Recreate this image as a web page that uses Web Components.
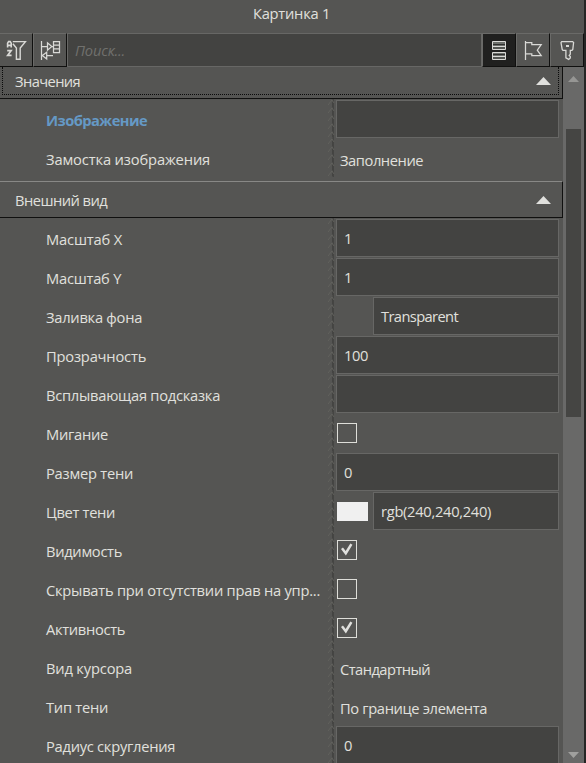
<!DOCTYPE html>
<html lang="ru"><head><meta charset="utf-8"><title>Картинка 1</title>
<style>html,body{margin:0;height:763px;overflow:hidden;background:#555553}
body{font:14.7px/20px "Open Sans","Noto Sans",sans-serif;color:#e0e0dd}</style></head>
<body><property-panel></property-panel>
<script>
const define=(name,html,init)=>{
  const t=document.createElement('template');t.innerHTML=html;
  customElements.define(name,class extends HTMLElement{
    connectedCallback(){
      if(this.shadowRoot)return;
      this.attachShadow({mode:'open'}).append(t.content.cloneNode(true));
      if(init)init.call(this,this.shadowRoot);
    }
  });
};
// Text run tracked so that it occupies the width given in its "w" attribute.
define('fit-text','<style>:host{display:inline-block;white-space:pre}</style><span><slot></slot></span>',function(r){
  const s=r.querySelector('span'),w=+this.getAttribute('w');
  const n=this.textContent.length;
  if(w)s.style.letterSpacing=((n>1?w-.9:w)-s.getBoundingClientRect().width)/n+'px';
});
define('tool-button',`<style>:host{display:block;box-sizing:border-box;width:34px;height:34px;border-top:1px solid #6a6a68;border-left:1px solid #6a6a68;border-right:1px solid #10100f;border-bottom:1px solid #10100f;background:#555553}
:host([first]){width:33px;border-left:0}:host([active]){background:#20201f;border-color:#6a6a68 #10100f #10100f #6a6a68}</style><slot></slot>`);
define('tool-icon','<style>:host{display:block;width:32px;height:32px}svg{display:block;fill:none;stroke:#d9d9d6;stroke-width:1.25}</style><svg width="32" height="32"></svg>',function(r){
  r.querySelector('svg').innerHTML={
  filter:'<path d="M12.8 7.6H25.4L20.2 14V25.3H16.4V14L12.9 9.8" stroke-width="1.4"/><path d="M7.6 13.5V9.2L8.6 7.6H10.2L11.2 9.2V13.5M7.6 11.4H11.2M7.2 16.6H11.2L7.6 21.4H11.6" stroke-width="1.6"/>',
  sort:'<path d="M7.5 7V26M7.5 12.5H13.5M13.5 8.8V16.2L17.8 12.5ZM17.8 12.5H19.5M19.5 7.5H25.5V18.5H19.5ZM19.5 11.2H25.5M19.5 14.8H25.5M19 21.5H12.5M12.7 18.2V25L8.3 21.5Z"/>',
  list:'<path d="M9.5 7.5H22.5V15.5H9.5ZM9.5 18.5H22.5V25.5H9.5Z" fill="#6d706c" stroke-width="1"/><path d="M10 10.5H22M10 20.5H22" stroke="#30302f" stroke-width="1"/><path d="M10 12.5H22M10 22.5H22" stroke="#d9d9d6" stroke-width="1"/><path d="M10 14H22M10 24H22" stroke="#30302f" stroke-width=".8"/>',
  flag:'<path d="M8.5 7V26M8.5 8.5H14.8V10.7H24.2L20.3 16.2L24.2 21.6H14.8V19.8H8.5"/>',
  key:'<path d="M10.7 7.6H21.6L22.6 8.6L21.8 15.4L20.9 16.4H19.3V20.2L18.2 21.4L19.3 22.6V24L17.7 25.4L14.9 23.8V16.4H12L11.2 15.4L10 8.6Z" stroke-width="1.3"/><path d="M15 12H18" stroke-width="2"/>'}[this.getAttribute('name')];
});
define('search-box',`<style>:host{display:block;box-sizing:border-box;flex:1;height:34px;border:1px solid #676765;background:#434341;color:#70706d;font-style:italic;padding:6px 0 0 7px}</style><slot></slot>`);
define('group-header',`<style>:host{display:flex;box-sizing:border-box;width:563px;height:37px;border-top:1px solid #888886;border-right:1px solid #10100f;border-bottom:1px solid #10100f;padding:8px 11px 0 15px;justify-content:space-between}
svg{margin-top:6px}:host([focused]){position:relative;height:32px;border-top:0;padding-top:4px}
i{display:none}:host([focused]) i{display:block;position:absolute;left:2px;right:3px;top:0;bottom:3px;border:1px dotted #0a0a0a;border-top:0}</style>
<slot></slot><svg width="15" height="8"><path d="M0 8L7.5 0L15 8Z" fill="#e0e0dd"/></svg><i></i>`);
define('row-divider',`<style>:host{display:block;width:8px;height:39px}svg{display:block}</style>
<svg width="8" height="39"><path d="M4.5 0H6V39H4.5Z" fill="#454543"/><path d="M0 6L4 1L6 4M0 14L4 9L6 12M0 22L4 17L6 20M0 30L4 25L6 28M0 38L4 33L6 36" fill="none" stroke="#63635f" stroke-width=".9"/><path d="M4.5 3V8M4.5 11V16M4.5 19V24M4.5 27V32M4.5 35V38" stroke="#444442"/></svg>`);
define('property-row',`<style>:host{display:grid;grid-template-columns:282px 8px 227px;height:39px;padding-left:46px}
.label{line-height:42px;height:39px}:host([key]) .label{font-weight:bold;color:#6599c5}.value{display:flex;align-items:center;height:39px}</style>
<div class="label"><slot name="label"></slot></div><row-divider></row-divider><div class="value"><slot></slot></div>`);
define('text-field',`<style>:host{display:block;box-sizing:border-box;width:223px;height:38px;margin:1px 0 0;border:1px solid #676765;background:#434341;padding-left:7px;line-height:36px}:host([small]){width:186px;margin-left:4px}</style><slot></slot>`);
define('choice-value','<style>:host{display:block;padding-left:4px;line-height:39px;padding-top:6px}</style><slot></slot>');
define('color-swatch','<style>:host{display:block;width:31px;height:19px;margin:2px 1px 0}:host([solid]){background:#f0f0f0}</style>');
define('check-box',`<style>:host{display:block;box-sizing:border-box;width:20px;height:20px;margin:1px 0 0 1px;border:1px solid #deded9}svg{display:none}:host([checked]) svg{display:block}</style>
<svg width="18" height="18"><path d="M4 7.2L7.8 12.2L13.4 3.2" fill="none" stroke="#e0e0dd" stroke-width="2.5"/></svg>`);
define('scroll-bar',`<style>:host{display:block;width:21px;background:#696968;position:relative}svg{display:block;position:absolute;left:5px}.thumb{position:absolute;left:3px;top:62px;width:15px;height:288px;background:#454543}</style>
<svg width="11" height="6" style="top:9px"><path d="M0 6L5.5 0L11 6Z" fill="#969694"/></svg><div class="thumb"></div><svg width="11" height="6" style="bottom:5px"><path d="M0 0L5.5 6L11 0Z" fill="#a0a09e"/></svg>`);

const field=(t,w)=>`<text-field><fit-text w="${w}">${t}</fit-text></text-field>`;
const choice=(t,w)=>`<choice-value><fit-text w="${w}">${t}</fit-text></choice-value>`;
const box=c=>`<check-box ${c?'checked':''}></check-box>`;
const color=(t,w,s)=>`<color-swatch ${s?'solid':''}></color-swatch><text-field small><fit-text w="${w}">${t}</fit-text></text-field>`;
const row=([label,w,value,attr=''])=>`<property-row ${attr}><fit-text slot="label" w="${w}">${label}</fit-text>${value}</property-row>`;
const values=[['Изображение',102,'<text-field></text-field>','key'],['Замостка изображения',165,choice('Заполнение',84)]];
const look=[['Масштаб X',77,field('1',8)],['Масштаб Y',76,field('1',8)],['Заливка фона',97,color('Transparent',78)],
['Прозрачность',101,field('100',25)],['Всплывающая подсказка',175,'<text-field></text-field>'],['Мигание',63,box(0)],
['Размер тени',88,field('0',8)],['Цвет тени',70,color('rgb(240,240,240)',111,1)],['Видимость',77,box(1)],
['Скрывать при отсутствии прав на упр...',275,box(0)],['Активность',80,box(1)],['Вид курсора',87,choice('Стандартный',91)],
['Тип тени',63,choice('По границе элемента',148)],['Радиус скругления',130,field('0',8)]];
define('property-panel',`<style>:host{display:flex;flex-direction:column;box-sizing:border-box;width:586px;height:763px;border-right:2px solid #262625;overflow:hidden}
.title{height:33px;padding:3px 0 0 253px;box-sizing:border-box;flex:none}.tools{display:flex;height:34px;flex:none}.body{display:flex;height:696px}.list{width:563px;height:696px;overflow:hidden}.group{padding-bottom:4px}</style>
<div class="title"><fit-text w="78">Картинка 1</fit-text></div>
<div class="tools"><tool-button first><tool-icon name="filter"></tool-icon></tool-button><tool-button><tool-icon name="sort"></tool-icon></tool-button>
<search-box><fit-text w="51">Поиск...</fit-text></search-box>
<tool-button active><tool-icon name="list"></tool-icon></tool-button><tool-button><tool-icon name="flag"></tool-icon></tool-button><tool-button><tool-icon name="key"></tool-icon></tool-button></div>
<div class="body"><div class="list"><group-header focused><fit-text w="66">Значения</fit-text></group-header><div class="group">${values.map(row).join('')}</div>
<group-header><fit-text w="93">Внешний вид</fit-text></group-header>${look.map(row).join('')}</div><scroll-bar></scroll-bar></div>`);
</script></body></html>
